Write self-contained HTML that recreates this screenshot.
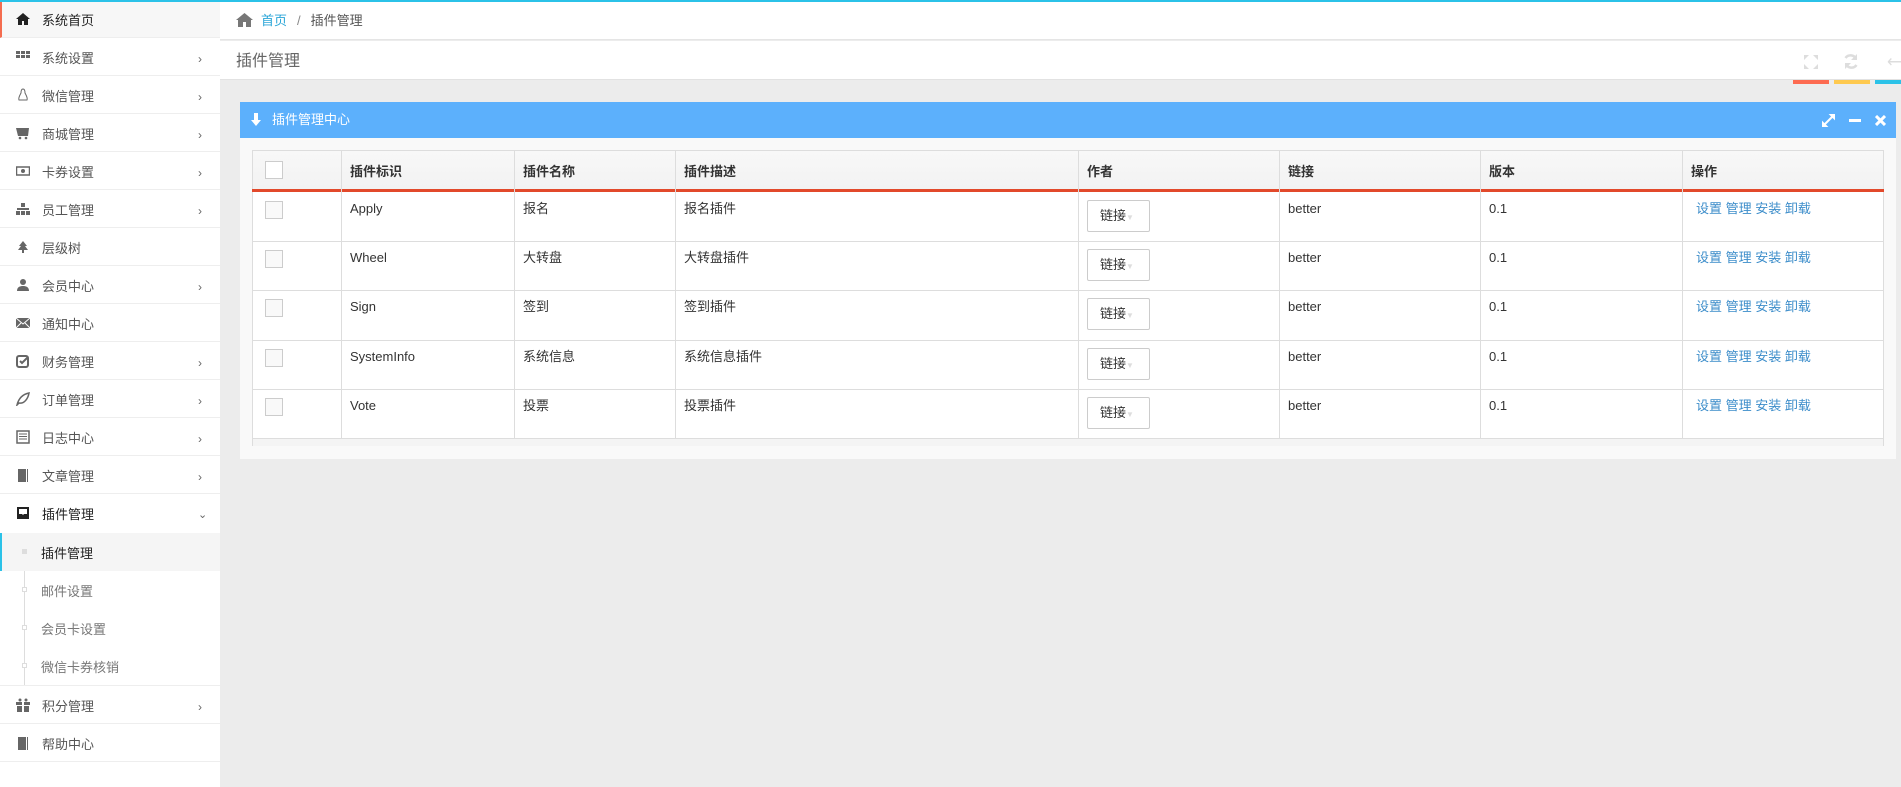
<!DOCTYPE html>
<html><head><meta charset="utf-8"><style>
*{margin:0;padding:0;box-sizing:border-box}
body{width:1901px;height:787px;overflow:hidden;background:#ececec;font-family:"Liberation Sans","Noto Sans CJK SC",sans-serif;font-size:13px;line-height:18px;color:#333;position:relative}
.side{position:absolute;left:0;top:0;width:220px;height:787px;background:#fff}
.mi{position:absolute;left:0;width:220px;height:38px;border-bottom:1px solid #eee;color:#555}
.mi .ic{position:absolute;left:16px;top:12px;width:14px;height:14px}
.mi .t{position:absolute;left:42px;top:12px}
.mi .ar{position:absolute;left:198px;top:12px;color:#666;font-size:12px}
.sub{position:absolute;left:0;width:220px;height:38px;color:#777}
.sub .t{position:absolute;left:41px;top:12px}
.sub .dot{position:absolute;left:22px;top:16px;width:5px;height:5px;border:1px solid #ddd;background:#fff}
</style></head><body>
<div style="position:absolute;left:0;top:0;width:1901px;height:2px;background:#2bc2e8;z-index:5"></div>
<div class="side">
<div class="mi" style="top:0;background:#f7f7f7;border-left:2px solid #f46c4f;color:#222"><svg class="ic" viewBox="0 0 14 14" style="left:14px"><path d="M7 1L0 7h2v6h4V9h2v4h4V7h2z" fill="#222"/></svg><span class="t" style="left:40px">系统首页</span></div>
<div class="mi" style="top:38px"><svg class="ic" viewBox="0 0 14 14"><g fill="#666"><rect x="0" y="1" width="4" height="3"/><rect x="5" y="1" width="4" height="3"/><rect x="10" y="1" width="4" height="3"/><rect x="0" y="5" width="4" height="3"/><rect x="5" y="5" width="4" height="3"/><rect x="10" y="5" width="4" height="3"/></g></svg><span class="t">系统设置</span><span class="ar">›</span></div>
<div class="mi" style="top:76px"><svg class="ic" viewBox="0 0 14 14"><path d="M7 1c-2 0-2 3-2 4-1 2-3 5-2 7h8c1-2-1-5-2-7 0-1 0-4-2-4z" fill="none" stroke="#666"/></svg><span class="t">微信管理</span><span class="ar">›</span></div>
<div class="mi" style="top:114px"><svg class="ic" viewBox="0 0 14 14"><path d="M0 2h13l-1 8H2z" fill="#666"/><circle cx="4" cy="12" r="1.3" fill="#666"/><circle cx="10" cy="12" r="1.3" fill="#666"/></svg><span class="t">商城管理</span><span class="ar">›</span></div>
<div class="mi" style="top:152px"><svg class="ic" viewBox="0 0 14 14"><rect x="0.5" y="3" width="13" height="8" fill="none" stroke="#666" stroke-width="1.5"/><circle cx="7" cy="7" r="2" fill="#666"/></svg><span class="t">卡券设置</span><span class="ar">›</span></div>
<div class="mi" style="top:190px"><svg class="ic" viewBox="0 0 14 14"><g fill="#666"><rect x="5" y="1" width="4" height="4"/><rect x="1" y="6" width="12" height="2"/><rect x="0" y="9" width="4" height="4"/><rect x="5" y="9" width="4" height="4"/><rect x="10" y="9" width="4" height="4"/></g></svg><span class="t">员工管理</span><span class="ar">›</span></div>
<div class="mi" style="top:228px"><svg class="ic" viewBox="0 0 14 14"><path d="M7 1L3 6h2L2 10h4v3h2v-3h4L9 6h2z" fill="#666"/></svg><span class="t">层级树</span></div>
<div class="mi" style="top:266px"><svg class="ic" viewBox="0 0 14 14"><circle cx="7" cy="4" r="3" fill="#666"/><path d="M1 13c0-4 3-5 6-5s6 1 6 5z" fill="#666"/></svg><span class="t">会员中心</span><span class="ar">›</span></div>
<div class="mi" style="top:304px"><svg class="ic" viewBox="0 0 14 14"><rect x="0" y="2" width="14" height="10" fill="#666"/><path d="M0 2l7 6 7-6M0 12l5-5M14 12l-5-5" stroke="#fff" fill="none"/></svg><span class="t">通知中心</span></div>
<div class="mi" style="top:342px"><svg class="ic" viewBox="0 0 14 14"><rect x="1" y="2" width="11" height="11" rx="2" fill="none" stroke="#666" stroke-width="2"/><path d="M4 7l2 2 6-6" stroke="#666" stroke-width="2" fill="none"/></svg><span class="t">财务管理</span><span class="ar">›</span></div>
<div class="mi" style="top:380px"><svg class="ic" viewBox="0 0 14 14"><path d="M1 13C3 5 8 2 13 1 12 7 8 12 3 11z" fill="none" stroke="#666" stroke-width="1.5"/></svg><span class="t">订单管理</span><span class="ar">›</span></div>
<div class="mi" style="top:418px"><svg class="ic" viewBox="0 0 14 14"><rect x="1" y="1" width="12" height="12" fill="none" stroke="#666" stroke-width="1.5"/><path d="M3 4h8M3 6.5h8M3 9h8" stroke="#666"/></svg><span class="t">日志中心</span><span class="ar">›</span></div>
<div class="mi" style="top:456px"><svg class="ic" viewBox="0 0 14 14"><rect x="2" y="1" width="10" height="13" fill="#666"/><rect x="10" y="1" width="1" height="13" fill="#fff"/></svg><span class="t">文章管理</span><span class="ar">›</span></div>
<div class="mi" style="top:494px;color:#222;border-bottom:none"><svg class="ic" viewBox="0 0 14 14"><path d="M1 1h12v12H1z" fill="#222"/><path d="M3 3h8v5H8l-1 1-1-1H3z" fill="#fff"/></svg><span class="t">插件管理</span><span class="ar" style="font-size:11px;top:12px">⌄</span></div>
<div style="position:absolute;left:24px;top:533px;width:1px;height:152px;background:#ddd"></div>
<div class="sub" style="top:533px;background:#f5f5f5;border-left:2px solid #2bc2e8;color:#222"><span class="dot" style="left:20px;background:#ddd"></span><span class="t" style="left:39px">插件管理</span></div>
<div class="sub" style="top:571px"><span class="dot"></span><span class="t">邮件设置</span></div>
<div class="sub" style="top:609px"><span class="dot"></span><span class="t">会员卡设置</span></div>
<div class="sub" style="top:647px;border-bottom:1px solid #eee;height:39px"><span class="dot"></span><span class="t">微信卡券核销</span></div>
<div class="mi" style="top:686px"><svg class="ic" viewBox="0 0 14 14"><g fill="#666"><rect x="0" y="4" width="6" height="3"/><rect x="8" y="4" width="6" height="3"/><rect x="1" y="8" width="5" height="6"/><rect x="8" y="8" width="5" height="6"/><circle cx="4" cy="2" r="1.5"/><circle cx="10" cy="2" r="1.5"/></g></svg><span class="t">积分管理</span><span class="ar">›</span></div>
<div class="mi" style="top:724px"><svg class="ic" viewBox="0 0 14 14"><rect x="2" y="1" width="10" height="13" fill="#666"/><rect x="10" y="1" width="1" height="13" fill="#fff"/></svg><span class="t">帮助中心</span></div>
</div>
<div style="position:absolute;left:220px;top:2px;width:1681px;height:38px;background:#fff;border-bottom:1px solid #e5e5e5"></div>
<svg style="position:absolute;left:236px;top:13px" width="17" height="14" viewBox="0 0 17 14"><path d="M8.5 0L0 7h2v7h5V9h3v5h5V7h2z" fill="#777"/></svg>
<div style="position:absolute;left:261px;top:12px;font-size:13px"><span style="color:#2ba6d8">首页</span><span style="color:#888;margin:0 10px">/</span><span style="color:#555">插件管理</span></div>
<div style="position:absolute;left:220px;top:41px;width:1681px;height:39px;background:#fff;border-bottom:1px solid #e2e2e2"></div>
<div style="position:absolute;left:236px;top:51px;font-size:16px;line-height:22px;color:#666">插件管理</div>
<svg style="position:absolute;left:1803px;top:54px" width="16" height="16" viewBox="0 0 16 16"><path d="M1 1h5L1 6zM15 1h-5l5 5zM1 15h5l-5-5zM15 15h-5l5-5z" fill="#ddd"/></svg>
<svg style="position:absolute;left:1843px;top:53px" width="16" height="17" viewBox="0 0 16 17"><path d="M13 6A6 6 0 0 0 2.5 5M3 11a6 6 0 0 0 10.5 1" stroke="#ddd" stroke-width="2.5" fill="none"/><path d="M14 1v6H8zM2 16v-6h6z" fill="#ddd"/></svg>
<div style="position:absolute;left:1887px;top:54px;color:#ddd;font-size:16px">⟷</div>
<div style="position:absolute;left:1793px;top:80px;width:36px;height:4px;background:#fd6b51"></div>
<div style="position:absolute;left:1834px;top:80px;width:36px;height:4px;background:#fec94f"></div>
<div style="position:absolute;left:1875px;top:80px;width:26px;height:4px;background:#2bc2e8"></div>
<div style="position:absolute;left:240px;top:102px;width:1656px;height:357px;background:#f9f9f9"></div>
<div style="position:absolute;left:240px;top:102px;width:1656px;height:36px;background:#5cb0fc"></div>
<svg style="position:absolute;left:250px;top:113px" width="12" height="13" viewBox="0 0 12 13"><path d="M4 0h4v7h3L6 13 1 7h3z" fill="#fff"/></svg>
<div style="position:absolute;left:272px;top:111px;color:#fff;font-size:13px">插件管理中心</div>
<svg style="position:absolute;left:1822px;top:114px" width="13" height="13" viewBox="0 0 13 13"><path d="M8 0h5v5zM0 13V8l5 5zM11 2L2 11" stroke="#fff" stroke-width="2" fill="#fff"/></svg>
<div style="position:absolute;left:1849px;top:119px;width:12px;height:3px;background:#fff"></div>
<svg style="position:absolute;left:1875px;top:115px" width="11" height="11" viewBox="0 0 11 11"><path d="M1 1l9 9M10 1l-9 9" stroke="#fff" stroke-width="3"/></svg>
<div style="position:absolute;left:252px;top:150px;width:1632px;height:296px;background:#fff;border:1px solid #ddd"></div>
<div style="position:absolute;left:253px;top:151px;width:1630px;height:38px;background:linear-gradient(#f8f8f8,#f2f2f2)"></div>
<div style="position:absolute;left:252px;top:189px;width:1632px;height:3px;background:#e2492b"></div>
<div style="position:absolute;left:253px;top:438px;width:1630px;height:8px;background:#f4f4f4;border-top:1px solid #ddd"></div>
<div id="t"></div>
<script>
var cols=[252,341,514,675,1078,1279,1480,1682,1884];
var h='';
for(var i=1;i<cols.length-1;i++)h+='<div style="position:absolute;left:'+cols[i]+'px;top:151px;width:1px;height:287px;background:#ddd"></div>';
var rows=[192,241,290,340,389,438];
for(var r=1;r<5;r++)h+='<div style="position:absolute;left:253px;top:'+rows[r]+'px;width:1630px;height:1px;background:#ddd"></div>';
var hd=['插件标识','插件名称','插件描述','作者','链接','版本','操作'];
h+='<div style="position:absolute;left:265px;top:161px;width:18px;height:18px;border:1px solid #ccc;background:#fff"></div>';
for(var c=0;c<7;c++)h+='<div style="position:absolute;left:'+(cols[c+1]+9)+'px;top:163px;font-weight:bold;color:#333">'+hd[c]+'</div>';
var d=[['Apply','报名','报名插件'],['Wheel','大转盘','大转盘插件'],['Sign','签到','签到插件'],['SystemInfo','系统信息','系统信息插件'],['Vote','投票','投票插件']];
for(var r=0;r<5;r++){var y=rows[r];
h+='<div style="position:absolute;left:265px;top:'+(y+9)+'px;width:18px;height:18px;border:1px solid #ccc;background:#f9f9f9"></div>';
h+='<div style="position:absolute;left:350px;top:'+(y+8)+'px">'+d[r][0]+'</div>';
h+='<div style="position:absolute;left:523px;top:'+(y+8)+'px">'+d[r][1]+'</div>';
h+='<div style="position:absolute;left:684px;top:'+(y+8)+'px">'+d[r][2]+'</div>';
h+='<div style="position:absolute;left:1087px;top:'+(y+8)+'px;width:63px;height:32px;border:1px solid #ccc;border-radius:2px;background:#fff;padding:6px 0 0 12px">链接<span style="color:#ddd;font-size:8px">▼</span></div>';
h+='<div style="position:absolute;left:1288px;top:'+(y+8)+'px">better</div>';
h+='<div style="position:absolute;left:1489px;top:'+(y+8)+'px">0.1</div>';
h+='<div style="position:absolute;left:1696px;top:'+(y+8)+'px;color:#3c8dca">设置 管理 安装 卸载</div>';}
document.getElementById('t').innerHTML=h;
</script>
</body></html>
